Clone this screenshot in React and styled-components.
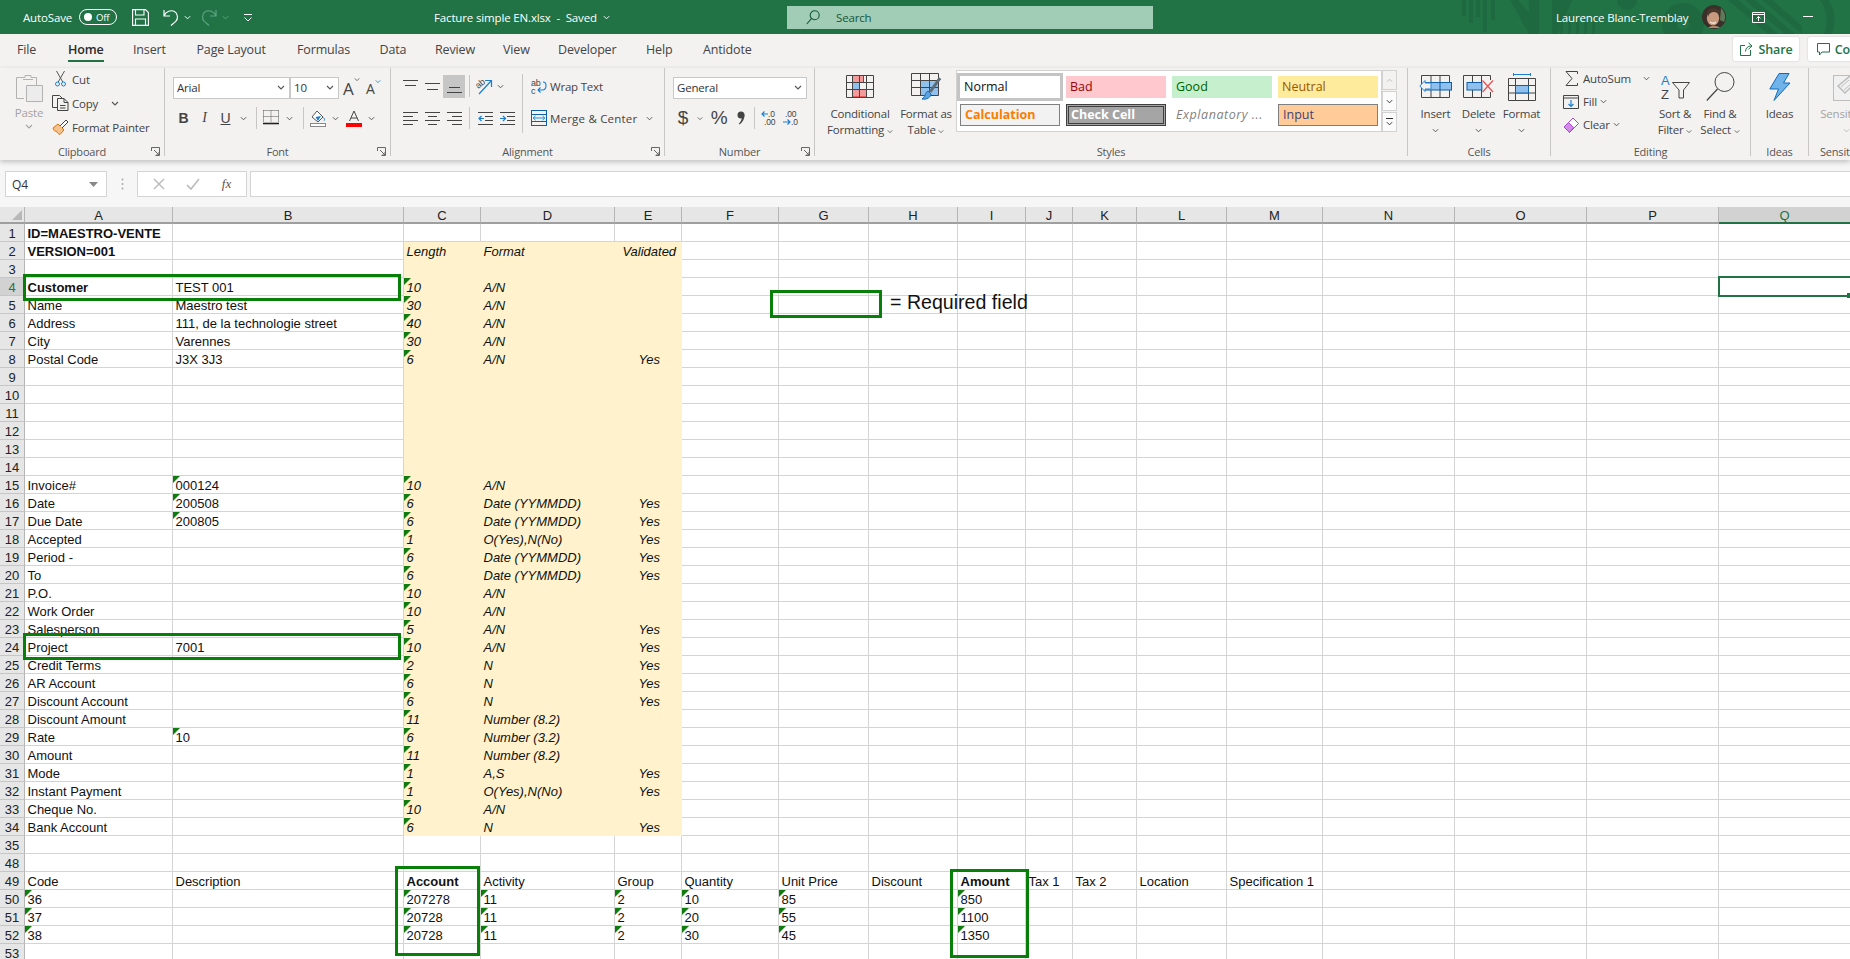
import React from "react";
import styled, { createGlobalStyle } from "styled-components";

const UI = `"Open Sans", "Noto Sans", sans-serif`;
const CELL = `"Liberation Sans", Arial, sans-serif`;
const GREEN = "#217346";

const GlobalStyle = createGlobalStyle`
  html, body {
    margin: 0;
    padding: 0;
    width: 1850px;
    height: 959px;
    overflow: hidden;
    background: #fff;
  }
  * { box-sizing: border-box; }
`;

const Page = styled.div`
  width: 1850px;
  height: 959px;
  overflow: hidden;
  font-family: ${UI};
  background: #f5f5f5;
`;

/* ---- title bar ---- */
const TitleBar = styled.div`
  position: relative;
  height: 34px;
  background: ${GREEN};
  color: #fff;
  display: flex;
  align-items: center;
  font-size: 11.5px;
  letter-spacing: -0.15px;
`;
const Pattern = styled.svg`
  position: absolute;
  left: 1400px;
  top: 0;
`;
const QuickAccess = styled.div`
  width: 434px;
  padding-left: 23px;
  display: flex;
  align-items: center;
  flex-shrink: 0;
`;
const Toggle = styled.div`
  width: 38px;
  height: 16px;
  margin: 0 15px 0 7px;
  border: 1px solid #fff;
  border-radius: 8px;
  display: flex;
  align-items: center;
  gap: 4px;
  padding-left: 4px;
  font-size: 9.5px;
  &::before {
    content: "";
    width: 8px;
    height: 8px;
    border-radius: 50%;
    background: #fff;
  }
`;
const QuickIcon = styled.span`
  display: flex;
  align-items: center;
  margin-left: ${(p) => p.$gap || 0}px;
`;
const DocTitle = styled.div`
  width: 353px;
  flex-shrink: 0;
  display: flex;
  align-items: center;
  gap: 6px;
`;
const SearchBox = styled.div`
  width: 366px;
  height: 23px;
  flex-shrink: 0;
  background: #a1ccb6;
  color: #14573a;
  display: flex;
  align-items: center;
  gap: 16px;
  padding-left: 19px;
`;
const UserName = styled.div`
  margin-left: 403px;
  width: 144px;
  flex-shrink: 0;
  position: relative;
`;
const WindowButtons = styled.div`
  position: relative;
  display: flex;
  align-items: center;
  margin-left: 26px;
  gap: 38px;
`;

/* ---- tabs ---- */
const TabRow = styled.div`
  height: 34px;
  background: #f3f2f1;
  display: flex;
  align-items: flex-start;
  padding: 3px 0 0 17px;
  font-size: 12.5px;
  letter-spacing: -0.15px;
  color: #444;
`;
const Tab = styled.div`
  width: ${(p) => p.$w}px;
  flex-shrink: 0;
  height: 25px;
  line-height: 26px;
  white-space: nowrap;
  span {
    display: inline-block;
    height: 25px;
    color: ${(p) => (p.$active ? "#2b2b2b" : "#444")};
    font-weight: ${(p) => (p.$active ? 600 : 400)};
    border-bottom: ${(p) => (p.$active ? `2px solid ${GREEN}` : "none")};
  }
`;
const TabSpacer = styled.div`
  flex: 1;
`;
const ShareButton = styled.div`
  flex-shrink: 0;
  width: ${(p) => p.$w}px;
  margin-right: ${(p) => p.$mr}px;
  height: 24px;
  background: #fff;
  border-radius: 2px;
  box-shadow: 0 0 2px rgba(0, 0, 0, 0.2);
  color: ${GREEN};
  font-weight: 600;
  font-size: 12.5px;
  display: flex;
  align-items: center;
  justify-content: center;
  gap: 5px;
`;

/* ---- ribbon ---- */
const Ribbon = styled.div`
  position: relative;
  z-index: 2;
  height: 92px;
  background: #f3f2f1;
  display: flex;
  box-shadow: 0 2px 5px rgba(0, 0, 0, 0.22);
  font-size: 11.5px;
  letter-spacing: -0.2px;
  color: #444;
`;
const Group = styled.div`
  position: relative;
  width: ${(p) => p.$w}px;
  flex-shrink: 0;
  height: 88px;
  border-right: ${(p) => (p.$last ? "none" : "1px solid #c8c6c4")};
  display: flex;
  flex-direction: column;
`;
const GroupBody = styled.div`
  flex: 1;
  min-height: 0;
  display: flex;
  padding-left: ${(p) => p.$pl || 0}px;
`;
const GroupLabel = styled.div`
  height: 16px;
  margin-bottom: -4px;
  line-height: 16px;
  text-align: ${(p) => (p.$left ? "left" : "center")};
  padding-left: ${(p) => (p.$left ? 11 : 0)}px;
  font-size: 11px;
  color: #555;
  white-space: nowrap;
`;
const Launcher = styled.svg`
  position: absolute;
  right: 4px;
  bottom: 0;
`;
const PasteButton = styled.div`
  width: 34px;
  margin-left: 12px;
  margin-right: 5px;
  padding-top: 5px;
  display: flex;
  flex-direction: column;
  align-items: center;
  color: #a3a3a3;
  line-height: 14px;
  gap: 4px;
`;
const SmallList = styled.div`
  display: flex;
  flex-direction: column;
  margin-top: -1px;
  width: ${(p) => p.$w || 100}px;
`;
const SmallRow = styled.div`
  height: ${(p) => p.$h || 24}px;
  display: flex;
  align-items: center;
  white-space: nowrap;
  gap: 3px;
  letter-spacing: ${(p) => p.$ls || -0.2}px;
`;
const SmallIcon = styled.span`
  width: 18px;
  display: flex;
  justify-content: center;
  flex-shrink: 0;
`;
const StackCol = styled.div`
  padding: 9px 0 0 ${(p) => p.$pl || 0}px;
  display: flex;
  flex-direction: column;
  gap: 8px;
`;
const ToolRow = styled.div`
  height: 22px;
  display: flex;
  align-items: center;
`;
const Select = styled.div`
  width: ${(p) => p.$w}px;
  height: 22px;
  background: #fff;
  border: 1px solid #c8c8c8;
  display: flex;
  align-items: center;
  justify-content: space-between;
  padding: 0 4px 2px 3px;
  font-size: 11.5px;
  color: #333;
`;
const GrowFont = styled.span`
  display: flex;
  align-items: flex-start;
  width: ${(p) => p.$w}px;
  margin-left: ${(p) => p.$gap || 0}px;
  font-size: ${(p) => p.$size}px;
  color: #444;
  font-family: ${UI};
`;
const ToolButton = styled.div`
  width: ${(p) => p.$w || 22}px;
  height: 23px;
  display: flex;
  align-items: center;
  justify-content: center;
  flex-shrink: 0;
  background: ${(p) => (p.$on ? "#c6c6c6" : "transparent")};
  color: #444;
`;
const Letter = styled.span`
  font-family: ${(p) => (p.$serif ? `"Liberation Serif", serif` : CELL)};
  font-weight: ${(p) => (p.$bold ? 700 : 400)};
  font-style: ${(p) => (p.$italic ? "italic" : "normal")};
  text-decoration: ${(p) => (p.$under ? "underline" : "none")};
  font-size: ${(p) => p.$size || 14}px;
  color: #444;
`;
const ToolSep = styled.span`
  width: 1px;
  height: 22px;
  background: #c8c6c4;
  margin: 0 ${(p) => p.$m || 4}px;
  flex-shrink: 0;
`;
const AlignBlock = styled.div`
  width: 131px;
  padding: 7px 0 0 8px;
  height: 66px;
  display: flex;
  flex-direction: column;
  gap: 10px;
`;
const VSep = styled.div`
  width: 1px;
  height: 59px;
  margin-top: 6px;
  background: #c8c6c4;
`;
const WrapBlock = styled.div`
  padding: 7px 0 0 8px;
  display: flex;
  flex-direction: column;
  gap: 10px;
`;
const BigButton = styled.div`
  width: ${(p) => p.$w}px;
  margin-left: ${(p) => p.$ml || 0}px;
  flex-shrink: 0;
  display: flex;
  flex-direction: column;
  align-items: center;
  text-align: center;
  line-height: 16px;
  white-space: nowrap;
  color: ${(p) => (p.$off ? "#a3a3a3" : "#444")};
`;
const BigIcon = styled.div`
  height: 38px;
  display: flex;
  align-items: center;
  justify-content: center;
  padding-bottom: 1px;
`;
const BigChev = styled.div`
  height: 16px;
  display: flex;
  align-items: center;
`;
const Gallery = styled.div`
  width: 426px;
  height: 62px;
  margin-top: 2px;
  background: #fff;
  border: 1px solid #d2d2d2;
  display: grid;
  grid-template-columns: repeat(4, 100px);
  grid-template-rows: 22px 22px;
  gap: 6px;
  padding: 5px 0 0 3px;
  flex-shrink: 0;
`;
const StyleCell = styled.div`
  display: flex;
  align-items: center;
  padding-left: ${(p) => (p.$double ? 2 : 4)}px;
  padding-bottom: 1px;
  font-size: 12.5px;
  letter-spacing: ${(p) => (p.$italic ? 0.55 : 0)}px;
  white-space: nowrap;
  overflow: hidden;
  background: ${(p) => p.$bg};
  color: ${(p) => p.$fg};
  border: ${(p) => p.$border || "none"};
  font-weight: ${(p) => (p.$bold ? 700 : 400)};
  font-style: ${(p) => (p.$italic ? "italic" : "normal")};
  box-shadow: ${(p) => (p.$picked ? "0 0 0 3px #c4c4c4" : "none")};
`;
const GalleryScroll = styled.div`
  width: 15px;
  margin-top: 2px;
  height: 62px;
  display: flex;
  flex-direction: column;
  gap: 1px;
`;
const ScrollPart = styled.div`
  flex: 1;
  border: 1px solid #d2d2d2;
  background: ${(p) => (p.$off ? "#f3f2f1" : "#fbfbfb")};
  display: flex;
  flex-direction: column;
  gap: 2px;
  align-items: center;
  justify-content: center;
  svg {
    transform: ${(p) => (p.$up ? "rotate(180deg)" : "none")};
  }
  &::before {
    content: "";
    display: ${(p) => (p.$bar ? "block" : "none")};
    width: 7px;
    height: 1px;
    background: #333;
  }
`;

/* ---- formula bar ---- */
const FormulaBar = styled.div`
  height: 47px;
  padding: 11px 0 0 5px;
  display: flex;
  align-items: flex-start;
  background: #f6f6f6;
`;
const NameBox = styled.div`
  width: 102px;
  height: 26px;
  background: #fff;
  border: 1px solid #d4d4d4;
  display: flex;
  align-items: center;
  justify-content: space-between;
  padding: 0 8px 0 6px;
  font-size: 12px;
  color: #333;
`;
const Grip = styled.div`
  width: 30px;
  height: 26px;
  display: flex;
  justify-content: center;
  align-items: center;
`;
const FormulaButtons = styled.div`
  width: 110px;
  height: 26px;
  background: #fff;
  border: 1px solid #d4d4d4;
  display: flex;
  align-items: center;
  justify-content: space-around;
  padding: 0 4px;
`;
const FormulaInput = styled.div`
  flex: 1;
  height: 26px;
  margin-left: 3px;
  background: #fff;
  border: 1px solid #d4d4d4;
  border-right: none;
`;
const Fx = styled.span`
  font-family: "Liberation Serif", serif;
  font-style: italic;
  font-size: 13px;
  color: #555;
`;

/* ---- sheet ---- */
const Sheet = styled.div`
  position: relative;
  display: grid;
  grid-auto-rows: 18px;
  grid-template-rows: 17px;
  grid-template-columns: ${(p) => p.$cols};
  background: #fff;
  font-family: ${CELL};
  font-size: 13px;
  color: #111;
`;
const Corner = styled.div`
  background: #e6e6e6;
  border-right: 1px solid #b5b5b5;
  border-bottom: 2px solid #9f9f9f;
  position: relative;
  &::after {
    content: "";
    position: absolute;
    right: 2px;
    bottom: 2px;
    border-left: 10px solid transparent;
    border-bottom: 10px solid #b8b8b8;
  }
`;
const ColHead = styled.div`
  background: ${(p) => (p.$active ? "#d2d2d2" : "#e6e6e6")};
  border-right: 1px solid #b5b5b5;
  border-bottom: 2px solid ${(p) => (p.$active ? GREEN : "#9f9f9f")};
  color: ${(p) => (p.$active ? GREEN : "#222")};
  text-align: center;
  line-height: 17px;
`;
const RowHead = styled.div`
  background: ${(p) => (p.$active ? "#d2d2d2" : "#e6e6e6")};
  border-right: 1px solid #b5b5b5;
  border-bottom: 1px solid #c6c6c6;
  color: ${(p) => (p.$active ? GREEN : "#222")};
  text-align: center;
  line-height: 20px;
`;
const Cell = styled.div`
  position: relative;
  background: ${(p) => (p.$fill ? "#fff2cc" : "#fff")};
  border-right: 1px solid ${(p) => (p.$fill ? "#fff2cc" : "#d4d4d4")};
  border-bottom: 1px solid ${(p) => (p.$fill ? "#fff2cc" : "#d4d4d4")};
  padding-left: 2.5px;
  line-height: 20px;
  white-space: nowrap;
  font-weight: ${(p) => (p.$bold ? 700 : 400)};
  font-style: ${(p) => (p.$fill ? "italic" : "normal")};
  text-align: ${(p) => (p.$center ? "center" : "left")};
  ${(p) =>
    p.$tri &&
    `&::before {
      content: "";
      position: absolute;
      left: 0;
      top: 0;
      border-top: 7px solid #107c10;
      border-right: 7px solid transparent;
    }`}
`;
const Marker = styled.div`
  position: absolute;
  left: ${(p) => p.$x}px;
  top: ${(p) => p.$y}px;
  width: ${(p) => p.$w}px;
  height: ${(p) => p.$h}px;
  border: 3px solid #087f08;
  pointer-events: none;
`;
const Selection = styled.div`
  position: absolute;
  left: 1718px;
  top: 69px;
  width: 140px;
  height: 21px;
  border: 2px solid ${GREEN};
  pointer-events: none;
`;
const Handle = styled.div`
  position: absolute;
  left: 1847px;
  top: 86px;
  width: 4px;
  height: 5px;
  background: ${GREEN};
`;
const Legend = styled.div`
  position: absolute;
  left: 890px;
  top: 82px;
  font-size: 19.6px;
  line-height: 26px;
  color: #111;
  white-space: nowrap;
`;

/* ---- icons ---- */
const Chev = ({ c = "#555", w = 8 }) => (
  <svg width={w} height="5" viewBox="0 0 8 5" style={{ flexShrink: 0 }}>
    <path d="M1 1l3 3 3-3" fill="none" stroke={c} strokeWidth="1.1" />
  </svg>
);
const Launch = () => (
  <Launcher width="9" height="9" viewBox="0 0 9 9">
    <path d="M.5 4V.5H8.5V8.5H4.5M3 3l5 5M8 5v3H5" fill="none" stroke="#666" />
  </Launcher>
);
const Lines = ({ rows }) => (
  <svg width="15" height="15" viewBox="0 0 15 15">
    {rows.map(([a, b, y]) => (
      <path key={y} d={`M${a} ${y + 0.5}H${b}`} stroke="#444" />
    ))}
  </svg>
);
const IndentIcon = ({ right }) => (
  <svg width="15" height="15" viewBox="0 0 15 15">
    <path d="M0 1.5H15M7 5.5H15M7 9.5H15M0 13.5H15" stroke="#444" />
    <path d={right ? "M0 7.5H5M3 5l2.5 2.5L3 10" : "M1 7.5H6M3.5 5L1 7.5 3.5 10"} stroke="#1a7fd0" fill="none" strokeWidth="1.2" />
  </svg>
);

const SaveIcon = () => (
  <svg width="17" height="17" viewBox="0 0 17 17" fill="none" stroke="#fff" strokeWidth="1.1">
    <path d="M.6.6H13.5L16.4 3.5V16.4H.6Z" />
    <path d="M3.5.6V6H12V.6M3.5 16.4V10H13.5V16.4" />
  </svg>
);
const UndoIcon = ({ c = "#fff", flip }) => (
  <svg width="16" height="18" viewBox="0 0 16 18" fill="none" stroke={c} strokeWidth="1.2" style={flip ? { transform: "scaleX(-1)" } : undefined}>
    <path d="M1 2v6h6M1.2 7.6C3 3.5 8 1.6 11.5 3.6c3.800 2.200 3.800 7.400 1 10L8 17.500" />
  </svg>
);
const Customize = () => (
  <svg width="10" height="9" viewBox="0 0 10 9" fill="none" stroke="#fff">
    <path d="M1 1.500H9M1.500 4.500L5 8l3.500-3.500" />
  </svg>
);
const SearchIcon = () => (
  <svg width="14" height="15" viewBox="0 0 14 15" fill="none" stroke="#14573a" strokeWidth="1.1">
    <circle cx="8.700" cy="5.300" r="4.500" />
    <path d="M5.400 8.600L.8 14" />
  </svg>
);
const Avatar = () => (
  <svg width="24" height="24" viewBox="0 0 24 24" style={{ marginLeft: 2, position: "relative", flexShrink: 0 }}>
    <circle cx="12" cy="12" r="12" fill="#3a3029" />
    <path d="M19 3a12 12 0 0 1 3 14l-4-2z" fill="#5f7a58" />
    <ellipse cx="11" cy="13" rx="6.200" ry="7.500" fill="#c99a7d" />
    <path d="M6 12c1-5 8-7 11-2l1-5-7-2-6 3z" fill="#4a382c" />
    <path d="M8 17c2 1.500 4.500 1.500 6 0" stroke="#f1e4da" strokeWidth="1.300" fill="none" />
    <path d="M6 23c3-3 9-3 12 0z" fill="#a8886f" />
  </svg>
);
const RibbonDisplay = () => (
  <svg width="13" height="11" viewBox="0 0 13 11" fill="none" stroke="#fff">
    <path d="M.5.500H12.500V10.500H.5ZM.5 2.500H12.500M6.500 9V4.500M4.500 6.500l2-2 2 2" />
  </svg>
);
const Minimize = () => (
  <svg width="10" height="2" viewBox="0 0 10 2"><path d="M0 .5H10" stroke="#fff" /></svg>
);
const Maximize = () => (
  <svg width="10" height="10" viewBox="0 0 10 10" fill="none" stroke="#fff">
    <path d="M.5 2.500H7.500V9.500H.5ZM2.500 2.500V.5H9.500V7.500H7.500" />
  </svg>
);
const ShareIcon = () => (
  <svg width="14" height="14" viewBox="0 0 14 14" fill="none" stroke={GREEN}>
    <path d="M5 3.500H.5V13.500H10.500V8M5.500 9.500c0-3.500 2.500-5.500 5.500-5.500M8.500.8L12 4 8.500 7.300" />
  </svg>
);
const CommentIcon = () => (
  <svg width="13" height="13" viewBox="0 0 13 13" fill="none" stroke={GREEN}>
    <path d="M.5.500H12.500V9H5L2.500 12V9H.5Z" />
  </svg>
);

const PasteIcon = () => (
  <svg width="27" height="29" viewBox="0 0 27 29" fill="none" stroke="#b2b2b2">
    <path d="M3.500 4.500H9V2.500H15V4.500H20.500V12M8 25.500H.5V4.500H3.500" />
    <path d="M10.500 12.500H26.500V28.500H10.500Z" fill="#ececec" />
    <path d="M7 6.500H17" />
  </svg>
);
const CutIcon = () => (
  <svg width="11" height="16" viewBox="0 0 11 16" fill="none">
    <path d="M1.500 0L7.800 11M9.500 0L3.200 11" stroke="#555" />
    <circle cx="2.500" cy="13" r="2" stroke="#1a7fd0" />
    <circle cx="8.500" cy="13" r="2" stroke="#1a7fd0" />
  </svg>
);
const CopyIcon = () => (
  <svg width="17" height="16" viewBox="0 0 17 16" fill="none" stroke="#444">
    <path d="M5 12.500H.5V.5H7.500L10 3" />
    <path d="M5.500 3.500H12L16 7.500V15.500H5.500ZM12 3.500V7.500H16M8 10.500H13.500M8 13H13.500" />
  </svg>
);
const PainterIcon = () => (
  <svg width="17" height="16" viewBox="0 0 17 16" fill="none">
    <path d="M1 9l5-4 6 6-4 4.500c-2-.5-3-2.500-4-3.500-1 .5-2 0-3-3z" fill="#f6c28a" stroke="#d9730d" />
    <path d="M8 7l6-6 2 2-6 6" fill="#fff" stroke="#444" />
  </svg>
);
const BorderIcon = () => (
  <svg width="16" height="16" viewBox="0 0 16 16" fill="none" stroke="#555">
    <path d="M.5.500H15.500M.5.500V12M15.500.500V12M8 .500V12M.5 6.500H15.500" strokeDasharray="1 1" />
    <path d="M0 13.500H16" stroke="#222" strokeWidth="1.600" />
  </svg>
);
const BucketIcon = () => (
  <svg width="16" height="17" viewBox="0 0 16 17" fill="none">
    <path d="M7 1l6 6-5 5-6-5z" stroke="#555" fill="#fff" />
    <path d="M5.500 7l5.500-1-3 5z" fill="#1a7fd0" />
    <path d="M13.500 7.500c1 1.500 1.500 2.500.5 3.200" stroke="#1a7fd0" />
    <rect x="0.500" y="13.500" width="15" height="3" fill="#fff" stroke="#888" />
  </svg>
);
const FontColor = () => (
  <svg width="16" height="17" viewBox="0 0 16 17">
    <path d="M3.500 11L8 1l4.500 10M5 8h6" fill="none" stroke="#444" />
    <rect y="13" width="16" height="4" fill="#f00" />
  </svg>
);
const CommaIcon = () => (
  <svg width="8" height="14" viewBox="0 0 8 14">
    <circle cx="4" cy="4" r="3.500" fill="#444" />
    <path d="M7.500 4c0 4-2 7.500-5 9.500l-.7-.8C4 10.500 5 8 5 6z" fill="#444" />
  </svg>
);
const OrientIcon = () => (
  <svg width="17" height="18" viewBox="0 0 17 18" fill="none">
    <text x="0" y="10" fontSize="9" fill="#444" fontFamily={CELL} transform="rotate(-40 4 8)">ab</text>
    <path d="M3 17L15 4M9 3.500H15.500V10" stroke="#1a7fd0" strokeWidth="1.200" />
  </svg>
);
const WrapIcon = () => (
  <svg width="16" height="17" viewBox="0 0 16 17" fill="none">
    <text x="0" y="7.500" fontSize="9" fill="#444" fontFamily={CELL}>ab</text>
    <text x="0" y="16" fontSize="9" fill="#444" fontFamily={CELL}>c</text>
    <path d="M12 4c4 0 4 7 0 8H7M9.500 9.500L7 12l2.500 2.500" stroke="#1a7fd0" strokeWidth="1.100" />
  </svg>
);
const MergeIcon = () => (
  <svg width="16" height="16" viewBox="0 0 16 16" fill="none">
    <rect x=".5" y=".5" width="15" height="15" stroke="#0f5fa8" />
    <path d="M.5 4.500H15.500M.5 11.500H15.500" stroke="#0f5fa8" />
    <path d="M2 8H14M4.500 5.800L2.200 8l2.300 2.200M11.500 5.800L13.800 8l-2.300 2.200" stroke="#1a8fe0" />
  </svg>
);
const DecimalIcon = ({ more }) => (
  <svg width="16" height="16" viewBox="0 0 16 16" fill="none">
    <text x={more ? 7 : 2} y="7" fontSize="8.500" fill="#444" fontFamily={CELL}>{more ? ".0" : ".00"}</text>
    <text x={more ? 3 : 8} y="15" fontSize="8.500" fill="#444" fontFamily={CELL}>{more ? ".00" : ".0"}</text>
    <path d={more ? "M7 4H1M3.500 1.500L1 4l2.500 2.500" : "M0 12H7M4.500 9.500L7 12l-2.500 2.500"} stroke="#1a7fd0" strokeWidth="1.200" />
  </svg>
);
const CondIcon = () => (
  <svg width="28" height="23" viewBox="0 0 28 23" fill="none">
    <rect x="6.500" y=".5" width="11" height="7" fill="#f59a9a" stroke="#d62020" />
    <rect x="6.500" y="7.500" width="7" height="7" fill="#8fc0ee" stroke="#0f5fa8" />
    <rect x="6.500" y="14.500" width="14" height="7.500" fill="#f59a9a" stroke="#d62020" />
    <path d="M.5.500H27.500V22.500H.5ZM.5 7.500H27.500M.5 14.500H27.500M6.500.500V22.500M13.500.500V22.500M20.500.500V22.500" stroke="#444" />
  </svg>
);
const TableIcon = () => (
  <svg width="30" height="28" viewBox="0 0 30 28" fill="none">
    <rect x="10" y="7.500" width="18" height="15" fill="#8fc0ee" />
    <path d="M.5.500H27.500V22.500H.5ZM.5 7.500H27.500M.5 14.500H27.500M9.500.500V22.500M18.500.500V22.500" stroke="#444" />
    <path d="M29 5L19 19" stroke="#5f6b75" strokeWidth="3" />
    <path d="M17 18c-3 1-2 5-6 8 5 1 9-2 9-5z" fill="#5aa3e0" stroke="#1a6fb5" />
  </svg>
);
const InsertIcon = () => (
  <svg width="33" height="23" viewBox="0 0 33 23" fill="none">
    <path d="M2.500.500H30.500V22.500H2.500ZM12 .500V22.500M21 .500V22.500" stroke="#444" />
    <rect x="6" y="7.500" width="26.500" height="7.500" fill="#8fc0ee" stroke="#0f5fa8" />
    <path d="M21 7.500V15" stroke="#0f5fa8" />
    <path d="M12 8H6V5.500L.8 11 6 16.500V14H12Z" fill="#f3f2f1" stroke="#2b88d8" />
  </svg>
);
const DeleteIcon = () => (
  <svg width="31" height="23" viewBox="0 0 31 23" fill="none">
    <path d="M.5.500H27.500V22.500H.5ZM9.500.500V22.500M18.500.500V22.500" stroke="#444" />
    <rect x="4" y="7.500" width="15" height="7.500" fill="#8fc0ee" stroke="#0f5fa8" />
    <path d="M19 7.500V15" stroke="#0f5fa8" />
    <rect x="19.500" y="5" width="11" height="12" fill="#f3f2f1" />
    <path d="M19.500 5.500L30 17M30 5.500L19.500 17" stroke="#f04c4c" strokeWidth="1.200" />
  </svg>
);
const FormatIcon = () => (
  <svg width="28" height="28" viewBox="0 0 28 28" fill="none">
    <path d="M5.500 1.500H22.500M5.500 0V3M22.500 0V3" stroke="#1a7fd0" />
    <path d="M.5 5.500H27.500V27.500H.5ZM.5 12.500H27.500M.5 20H27.500M7.500 5.500V27.500M20.500 5.500V27.500" stroke="#444" />
    <rect x="7.500" y="12.500" width="13" height="7.500" fill="#8fc0ee" stroke="#0f5fa8" />
  </svg>
);
const SigmaIcon = () => (
  <svg width="13" height="15" viewBox="0 0 13 15" fill="none" stroke="#444">
    <path d="M12.500 3V.5H1L7 7.500 1 14.500H12.500V12" />
  </svg>
);
const FillIcon = () => (
  <svg width="16" height="14" viewBox="0 0 16 14" fill="none">
    <path d="M.5.500H15.500V13.500H.5ZM.5 3H15.500" stroke="#444" />
    <path d="M8 5V11.500M5.500 9L8 11.500 10.500 9" stroke="#1a7fd0" strokeWidth="1.200" />
  </svg>
);
const EraserIcon = () => (
  <svg width="16" height="16" viewBox="0 0 16 16" fill="none" stroke="#a64ac9">
    <path d="M10 1l5.500 5.500-9 9L1 10z" fill="#fff" />
    <path d="M5.500 5.500l5 5L6.500 15.500 1 10z" fill="#d38ae8" />
  </svg>
);
const SortIcon = () => (
  <svg width="29" height="26" viewBox="0 0 29 26" fill="none">
    <text x="0" y="11" fontSize="13" fill="#1a7fd0" fontFamily={CELL}>A</text>
    <text x="0" y="25" fontSize="13" fill="#444" fontFamily={CELL}>Z</text>
    <path d="M11.500 8.500H28.500L22.500 16V24H18V16Z" stroke="#444" />
  </svg>
);
const FindIcon = () => (
  <svg width="29" height="29" viewBox="0 0 29 29" fill="none" stroke="#444">
    <circle cx="18.500" cy="10" r="9.500" />
    <path d="M11.500 17L.8 28.500" strokeWidth="1.200" />
  </svg>
);
const BoltIcon = () => (
  <svg width="22" height="28" viewBox="0 0 22 28">
    <path d="M10 .5H20L14.500 10H21L5 27.500 9.500 16H.8Z" fill="#6fb3ea" stroke="#0f6cbd" />
  </svg>
);
const SensitivityIcon = () => (
  <svg width="27" height="28" viewBox="0 0 27 28" fill="none" stroke="#bdbdbd">
    <rect x=".5" y="2.500" width="25" height="25" fill="#f1f1f1" />
    <path d="M5 13l12-10 6 6-11 11z" strokeWidth="1.500" />
    <path d="M8 14l8-7M11 17l8-7" />
  </svg>
);
const TitlePattern = () => (
  <Pattern width="450" height="34" viewBox="0 0 450 34" fill="#1e6940">
    <path d="M62 0h4v16h-4zM69 0h4v23h-4zM76 0h4v17h-4zM83 0h4v32h-4zM91 0h4v20h-4z" />
    <path d="M110 0h8l11 13V0h10v34H129zM152 0h20l-14 34h-6z" />
    <path d="M152 20h3v14h-3zM160 10h3v24h-3zM168 14h3v20h-3zM176 16h3v18h-3zM184 18h3v16h-3zM192 20h3v14h-3z" />
    <circle cx="227" cy="0" r="10" />
    <path fillRule="evenodd" d="M283 3a21 21 0 1 0 .01 0zm0 15a6 6 0 1 1-.01 0z" />
    <path d="M328 0h10l40 34h-10zM345 0h10l40 34h-10zM362 0h10l30 26v8z" />
    <path d="M420 0h8c8 10 8 24 4 34h-8c4-10 4-24-4-34z" />
  </Pattern>
);

/* ---- data ---- */
const COLS = "ABCDEFGHIJKLMNOPQ".split("");
const WIDTHS = [148, 231, 77, 134, 67, 97, 90, 89, 68, 47, 64, 90, 96, 132, 132, 132, 132];

const tri = (t) => ({ t, tri: true });
const bold = (t) => ({ t, bold: true });
const dateRow = (a, c) => ({ A: a, C: tri(c), D: "Date (YYMMDD)", E: "Yes" });
const CONTENT = {
  1: { A: bold("ID=MAESTRO-VENTE") },
  2: { A: bold("VERSION=001"), C: "Length", D: "Format", E: "Validated" },
  4: { A: bold("Customer"), B: "TEST 001", C: tri("10"), D: "A/N" },
  5: { A: "Name", B: "Maestro test", C: tri("30"), D: "A/N" },
  6: { A: "Address", B: "111, de la technologie street", C: tri("40"), D: "A/N" },
  7: { A: "City", B: "Varennes", C: tri("30"), D: "A/N" },
  8: { A: "Postal Code", B: "J3X 3J3", C: tri("6"), D: "A/N", E: "Yes" },
  15: { A: "Invoice#", B: tri("000124"), C: tri("10"), D: "A/N" },
  16: { ...dateRow("Date", "6"), B: tri("200508") },
  17: { ...dateRow("Due Date", "6"), B: tri("200805") },
  18: { A: "Accepted", C: tri("1"), D: "O(Yes),N(No)", E: "Yes" },
  19: dateRow("Period -", "6"),
  20: dateRow("To", "6"),
  21: { A: "P.O.", C: tri("10"), D: "A/N" },
  22: { A: "Work Order", C: tri("10"), D: "A/N" },
  23: { A: "Salesperson", C: tri("5"), D: "A/N", E: "Yes" },
  24: { A: "Project", B: "7001", C: tri("10"), D: "A/N", E: "Yes" },
  25: { A: "Credit Terms", C: tri("2"), D: "N", E: "Yes" },
  26: { A: "AR Account", C: tri("6"), D: "N", E: "Yes" },
  27: { A: "Discount Account", C: tri("6"), D: "N", E: "Yes" },
  28: { A: "Discount Amount", C: tri("11"), D: "Number (8.2)" },
  29: { A: "Rate", B: tri("10"), C: tri("6"), D: "Number (3.2)" },
  30: { A: "Amount", C: tri("11"), D: "Number (8.2)" },
  31: { A: "Mode", C: tri("1"), D: "A,S", E: "Yes" },
  32: { A: "Instant Payment", C: tri("1"), D: "O(Yes),N(No)", E: "Yes" },
  33: { A: "Cheque No.", C: tri("10"), D: "A/N" },
  34: { A: "Bank Account", C: tri("6"), D: "N", E: "Yes" },
  49: {
    A: "Code", B: "Description", C: bold("Account"), D: "Activity", E: "Group", F: "Quantity",
    G: "Unit Price", H: "Discount", I: bold("Amount"), J: "Tax 1", K: "Tax 2", L: "Location", M: "Specification 1",
  },
  50: { A: tri("36"), C: tri("207278"), D: tri("11"), E: tri("2"), F: tri("10"), G: tri("85"), I: tri("850") },
  51: { A: tri("37"), C: tri("20728"), D: tri("11"), E: tri("2"), F: tri("20"), G: tri("55"), I: tri("1100") },
  52: { A: tri("38"), C: tri("20728"), D: tri("11"), E: tri("2"), F: tri("30"), G: tri("45"), I: tri("1350") },
};
const ROW_NUMBERS = [...Array.from({ length: 35 }, (_, i) => i + 1), 48, 49, 50, 51, 52, 53];

const TABS = [
  ["File", 51], ["Home", 65], ["Insert", 63.5], ["Page Layout", 100.5], ["Formulas", 82.5], ["Data", 55.5],
  ["Review", 68], ["View", 55], ["Developer", 88], ["Help", 57], ["Antidote", 80],
];
const STYLES = [
  { t: "Normal", bg: "#fff", fg: "#111", picked: true },
  { t: "Bad", bg: "#ffc7ce", fg: "#9c0006" },
  { t: "Good", bg: "#c6efce", fg: "#006100" },
  { t: "Neutral", bg: "#ffeb9c", fg: "#9c5700" },
  { t: "Calculation", bg: "#f2f2f2", fg: "#fa7d00", bold: true, border: "1px solid #7f7f7f" },
  { t: "Check Cell", bg: "#a5a5a5", fg: "#fff", bold: true, border: "3px double #3f3f3f", double: true },
  { t: "Explanatory ...", bg: "#fff", fg: "#7f7f7f", italic: true },
  { t: "Input", bg: "#ffcc99", fg: "#3f3f76", border: "1px solid #7f7f7f" },
];

function SheetGrid() {
  return (
    <Sheet $cols={`25px ${WIDTHS.map((w) => `${w}px`).join(" ")}`}>
      <Corner />
      {COLS.map((c) => (
        <ColHead key={c} $active={c === "Q"}>{c}</ColHead>
      ))}
      {ROW_NUMBERS.map((n) => (
        <React.Fragment key={n}>
          <RowHead $active={n === 4}>{n}</RowHead>
          {COLS.map((c) => {
            const raw = CONTENT[n] && CONTENT[n][c];
            const val = typeof raw === "string" ? { t: raw } : raw || {};
            const fill = n >= 2 && n <= 34 && "CDE".includes(c);
            return (
              <Cell key={c} $fill={fill} $bold={val.bold} $tri={val.tri} $center={fill && c === "E"}>
                {val.t}
              </Cell>
            );
          })}
        </React.Fragment>
      ))}
      <Marker $x={23} $y={67} $w={378} $h={27} />
      <Marker $x={23} $y={426} $w={378} $h={27} />
      <Marker $x={770} $y={83} $w={112} $h={28} />
      <Marker $x={395} $y={659} $w={85} $h={90} />
      <Marker $x={950} $y={662} $w={79} $h={89} />
      <Legend>= Required field</Legend>
      <Selection />
      <Handle />
    </Sheet>
  );
}

export default function App() {
  return (
    <Page>
      <GlobalStyle />
      <TitleBar>
        <TitlePattern />
        <QuickAccess>
          AutoSave
          <Toggle>Off</Toggle>
          <SaveIcon />
          <QuickIcon $gap={14}><UndoIcon /></QuickIcon>
          <QuickIcon $gap={5}><Chev c="#fff" w={7} /></QuickIcon>
          <QuickIcon $gap={10}><UndoIcon c="#5da582" flip /></QuickIcon>
          <QuickIcon $gap={5}><Chev c="#5da582" w={7} /></QuickIcon>
          <QuickIcon $gap={14}><Customize /></QuickIcon>
        </QuickAccess>
        <DocTitle>
          Facture simple EN.xlsx&nbsp; - &nbsp;Saved
          <Chev c="#fff" w={7} />
        </DocTitle>
        <SearchBox>
          <SearchIcon />
          Search
        </SearchBox>
        <UserName>Laurence Blanc-Tremblay</UserName>
        <Avatar />
        <WindowButtons>
          <RibbonDisplay />
          <Minimize />
          <Maximize />
        </WindowButtons>
      </TitleBar>

      <TabRow>
        {TABS.map(([t, w]) => (
          <Tab key={t} $w={w} $active={t === "Home"}>
            <span>{t}</span>
          </Tab>
        ))}
        <TabSpacer />
        <ShareButton $w={66} $mr={9}><ShareIcon />Share</ShareButton>
        <ShareButton $w={100} $mr={-58}><CommentIcon />Comments</ShareButton>
      </TabRow>

      <Ribbon>
        <Group $w={165}>
          <GroupBody>
            <PasteButton>
              <PasteIcon />
              Paste
              <Chev c="#a3a3a3" />
            </PasteButton>
            <SmallList>
              <SmallRow><SmallIcon><CutIcon /></SmallIcon>Cut</SmallRow>
              <SmallRow><SmallIcon><CopyIcon /></SmallIcon>Copy<QuickIcon $gap={10}><Chev /></QuickIcon></SmallRow>
              <SmallRow><SmallIcon><PainterIcon /></SmallIcon>Format Painter</SmallRow>
            </SmallList>
          </GroupBody>
          <GroupLabel>Clipboard</GroupLabel>
          <Launch />
        </Group>

        <Group $w={226}>
          <GroupBody>
            <StackCol $pl={8}>
              <ToolRow>
                <Select $w={117}>Arial<Chev /></Select>
                <Select $w={49}>10<Chev /></Select>
                <GrowFont $w={16} $size={17} $gap={4}>A<Chev w={6} /></GrowFont>
                <GrowFont $w={16} $size={14} $gap={7}>A<Chev w={6} c="#1a7fd0" /></GrowFont>
              </ToolRow>
              <ToolRow>
                <ToolButton $w={21}><Letter $bold>B</Letter></ToolButton>
                <ToolButton $w={21}><Letter $italic $serif>I</Letter></ToolButton>
                <ToolButton $w={21}><Letter $under>U</Letter></ToolButton>
                <ToolButton $w={15}><Chev w={7} /></ToolButton>
                <ToolSep $m={5} />
                <ToolButton $w={18}><BorderIcon /></ToolButton>
                <ToolButton $w={18}><Chev w={7} /></ToolButton>
                <ToolSep $m={5} />
                <ToolButton $w={18}><BucketIcon /></ToolButton>
                <ToolButton $w={16}><Chev w={7} /></ToolButton>
                <ToolButton $w={22}><FontColor /></ToolButton>
                <ToolButton $w={12}><Chev w={7} /></ToolButton>
              </ToolRow>
            </StackCol>
          </GroupBody>
          <GroupLabel>Font</GroupLabel>
          <Launch />
        </Group>

        <Group $w={274}>
          <GroupBody>
            <AlignBlock>
              <ToolRow>
                <ToolButton><Lines rows={[[0, 15, 1], [2, 13, 6]]} /></ToolButton>
                <ToolButton><Lines rows={[[0, 15, 4], [2, 13, 10]]} /></ToolButton>
                <ToolButton $on><Lines rows={[[2, 13, 8], [0, 15, 13]]} /></ToolButton>
                <ToolSep />
                <ToolButton $w={20}><OrientIcon /></ToolButton>
                <ToolButton $w={12}><Chev w={7} /></ToolButton>
              </ToolRow>
              <ToolRow>
                <ToolButton><Lines rows={[[0, 15, 1], [0, 10, 5], [0, 15, 9], [0, 10, 13]]} /></ToolButton>
                <ToolButton><Lines rows={[[0, 15, 1], [3, 12, 5], [0, 15, 9], [3, 12, 13]]} /></ToolButton>
                <ToolButton><Lines rows={[[0, 15, 1], [5, 15, 5], [0, 15, 9], [5, 15, 13]]} /></ToolButton>
                <ToolSep />
                <ToolButton $w={22}><IndentIcon /></ToolButton>
                <ToolButton $w={22}><IndentIcon right /></ToolButton>
              </ToolRow>
            </AlignBlock>
            <VSep />
            <WrapBlock>
              <ToolRow><SmallRow $h={22}><WrapIcon />Wrap Text</SmallRow></ToolRow>
              <ToolRow>
                <SmallRow $h={22} $ls={0.2}><MergeIcon />Merge &amp; Center<QuickIcon $gap={6}><Chev w={7} /></QuickIcon></SmallRow>
              </ToolRow>
            </WrapBlock>
          </GroupBody>
          <GroupLabel>Alignment</GroupLabel>
          <Launch />
        </Group>

        <Group $w={150}>
          <GroupBody>
            <StackCol $pl={8}>
              <ToolRow><Select $w={134}>General<Chev /></Select></ToolRow>
              <ToolRow>
                <ToolButton $w={20}><Letter $size={19}>$</Letter></ToolButton>
                <ToolButton $w={14}><Chev w={6} /></ToolButton>
                <ToolButton $w={24}><Letter $size={19}>%</Letter></ToolButton>
                <ToolButton $w={20}><CommaIcon /></ToolButton>
                <ToolSep $m={3} />
                <ToolButton $w={22}><DecimalIcon more /></ToolButton>
                <ToolButton $w={22}><DecimalIcon /></ToolButton>
              </ToolRow>
            </StackCol>
          </GroupBody>
          <GroupLabel>Number</GroupLabel>
          <Launch />
        </Group>

        <Group $w={593}>
          <GroupBody $pl={13}>
            <BigButton $w={64}>
              <BigIcon><CondIcon /></BigIcon>
              Conditional
              <span>Formatting <Chev w={6} /></span>
            </BigButton>
            <BigButton $w={60} $ml={4}>
              <BigIcon><TableIcon /></BigIcon>
              Format as
              <span>Table <Chev w={6} /></span>
            </BigButton>
            <Gallery>
              {STYLES.map((s) => (
                <StyleCell key={s.t} $bg={s.bg} $fg={s.fg} $bold={s.bold} $italic={s.italic} $border={s.border} $picked={s.picked} $double={s.double}>
                  {s.t}
                </StyleCell>
              ))}
            </Gallery>
            <GalleryScroll>
              <ScrollPart $off $up><Chev c="#bbb" w={7} /></ScrollPart>
              <ScrollPart><Chev c="#333" w={7} /></ScrollPart>
              <ScrollPart $bar><Chev c="#333" w={7} /></ScrollPart>
            </GalleryScroll>
          </GroupBody>
          <GroupLabel>Styles</GroupLabel>
        </Group>

        <Group $w={143}>
          <GroupBody $pl={6}>
            <BigButton $w={43}>
              <BigIcon><InsertIcon /></BigIcon>
              Insert
              <BigChev><Chev w={7} /></BigChev>
            </BigButton>
            <BigButton $w={43}>
              <BigIcon><DeleteIcon /></BigIcon>
              Delete
              <BigChev><Chev w={7} /></BigChev>
            </BigButton>
            <BigButton $w={43}>
              <BigIcon><FormatIcon /></BigIcon>
              Format
              <BigChev><Chev w={7} /></BigChev>
            </BigButton>
          </GroupBody>
          <GroupLabel>Cells</GroupLabel>
        </Group>

        <Group $w={200}>
          <GroupBody $pl={11}>
            <SmallList $w={90}>
              <SmallRow $h={23}><SmallIcon><SigmaIcon /></SmallIcon>AutoSum<QuickIcon $gap={9}><Chev w={7} /></QuickIcon></SmallRow>
              <SmallRow $h={23}><SmallIcon><FillIcon /></SmallIcon>Fill<Chev w={7} /></SmallRow>
              <SmallRow $h={23}><SmallIcon><EraserIcon /></SmallIcon>Clear<Chev w={7} /></SmallRow>
            </SmallList>
            <BigButton $w={46}>
              <BigIcon><SortIcon /></BigIcon>
              Sort &amp;
              <span>Filter <Chev w={6} /></span>
            </BigButton>
            <BigButton $w={44}>
              <BigIcon><FindIcon /></BigIcon>
              Find &amp;
              <span>Select <Chev w={6} /></span>
            </BigButton>
          </GroupBody>
          <GroupLabel>Editing</GroupLabel>
        </Group>

        <Group $w={58}>
          <GroupBody>
            <BigButton $w={57}>
              <BigIcon><BoltIcon /></BigIcon>
              Ideas
            </BigButton>
          </GroupBody>
          <GroupLabel>Ideas</GroupLabel>
        </Group>

        <Group $w={60} $last>
          <GroupBody $pl={7}>
            <BigButton $w={60} $off>
              <BigIcon><SensitivityIcon /></BigIcon>
              Sensitivity
              <BigChev><Chev c="#bbb" w={7} /></BigChev>
            </BigButton>
          </GroupBody>
          <GroupLabel $left>Sensitivity</GroupLabel>
        </Group>
      </Ribbon>

      <FormulaBar>
        <NameBox>
          Q4
          <svg width="9" height="5" viewBox="0 0 9 5"><path d="M0 0h9L4.500 5z" fill="#888" /></svg>
        </NameBox>
        <Grip>
          <svg width="3" height="12" viewBox="0 0 3 12" fill="#aaa">
            <circle cx="1.500" cy="1.500" r="1" /><circle cx="1.500" cy="6" r="1" /><circle cx="1.500" cy="10.500" r="1" />
          </svg>
        </Grip>
        <FormulaButtons>
          <svg width="12" height="12" viewBox="0 0 12 12"><path d="M1 1l10 10M11 1L1 11" stroke="#bdbdbd" strokeWidth="1.500" /></svg>
          <svg width="14" height="12" viewBox="0 0 14 12"><path d="M1 7l4 4 8-10" stroke="#bdbdbd" strokeWidth="1.700" fill="none" /></svg>
          <Fx>fx</Fx>
        </FormulaButtons>
        <FormulaInput />
      </FormulaBar>

      <SheetGrid />
    </Page>
  );
}
